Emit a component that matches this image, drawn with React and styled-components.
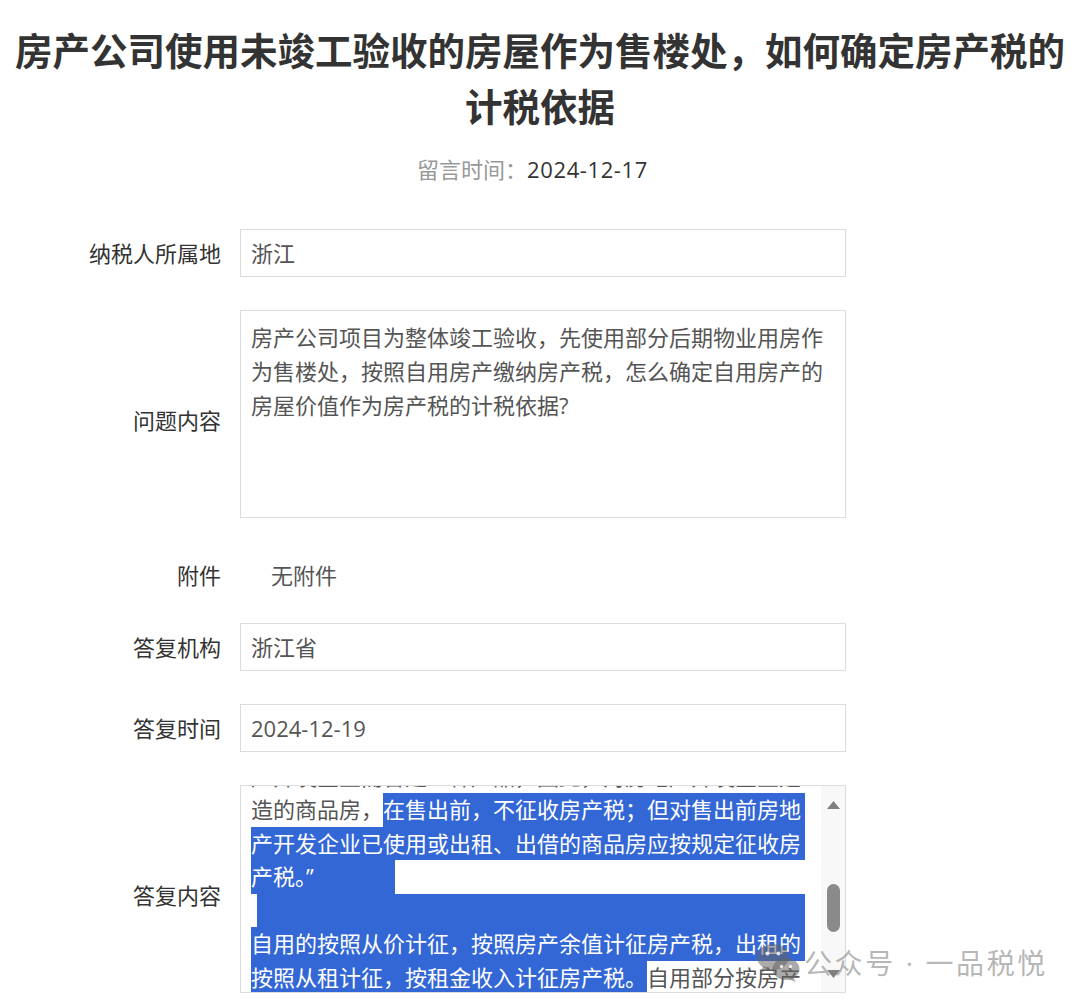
import React from "react";
import styled, { createGlobalStyle } from "styled-components";

const FONT = `"Open Sans", "Noto Sans CJK SC", sans-serif`;

const Global = createGlobalStyle`
  html, body { margin: 0; padding: 0; background: #fff; }
  body { font-family: ${FONT}; overflow: hidden; }
  * { box-sizing: border-box; }
`;

const Page = styled.div`
  position: relative;
  width: 1080px;
  height: 1006px;
  padding-top: 21px;
  overflow: hidden;
`;

const Title = styled.h1`
  margin: 0;
  font-family: "Noto Sans CJK SC", sans-serif;
  font-size: 37.5px;
  line-height: 56px;
  font-weight: 700;
  color: #333;
  text-align: center;
`;

const Meta = styled.div`
  margin-top: 19px;
  padding-right: 15px;
  font-size: 22px;
  line-height: 34px;
  text-align: center;
  color: #333;
`;

const MetaLabel = styled.span`
  color: #999;
`;

const MetaDate = styled.span`
  letter-spacing: 0.6px;
`;

const Form = styled.div`
  margin-top: 43px;
  display: flex;
  flex-direction: column;
  gap: 33px;
`;

const Row = styled.div`
  display: grid;
  grid-template-columns: 221px 606px;
  column-gap: 19px;
  align-items: center;
  ${(p) => (p.$height ? `height: ${p.$height}px; padding-top: 7px;` : "")}
`;

const Label = styled.div`
  font-size: 22px;
  line-height: 34px;
  color: #333;
  text-align: right;
  white-space: nowrap;
  padding-top: ${(p) => (p.$offset ? p.$offset : 0)}px;
`;

const Field = styled.div`
  height: 48px;
  border: 1px solid #dcdcdc;
  padding: 0 10px;
  font-size: 22px;
  line-height: 46px;
  color: #555;
`;

const TextBox = styled.div`
  height: 208px;
  border: 1px solid #dcdcdc;
  padding: 9px 10px;
  font-size: 22px;
  line-height: 34px;
  color: #555;
`;

const PlainValue = styled.div`
  font-size: 22px;
  line-height: 29px;
  color: #555;
  padding-left: 31px;
`;

const AnswerBox = styled.div`
  height: 208px;
  border: 1px solid #dcdcdc;
  display: flex;
  overflow: hidden;
`;

const AnswerText = styled.div`
  flex: 1;
  overflow: hidden;
  padding: 0 16px 0 10px;
  font-size: 22px;
  line-height: 33.5px;
  color: #555;
`;

const Lines = styled.div`
  margin-top: -26.5px;
`;

const Line = styled.div`
  display: flex;
  height: 33.5px;
  white-space: nowrap;
`;

const Sel = styled.span`
  background: #3367d6;
  color: #fff;
  ${(p) => (p.$fill ? "flex: 1;" : "")}
  ${(p) => (p.$width ? `width: ${p.$width}px;` : "")}
  ${(p) => (p.$indent ? `margin-left: ${p.$indent}px;` : "")}
`;

const ScrollTrack = styled.div`
  width: 24px;
  background: #f8f8f8;
  display: flex;
  flex-direction: column;
  align-items: center;
  padding-top: 15px;
`;

const Thumb = styled.div`
  width: 13px;
  height: 48px;
  border-radius: 7px;
  background: #8a8a8a;
  margin-top: 75px;
  margin-bottom: 38px;
`;

const Arrow = ({ down }) => (
  <svg width="13" height="8" viewBox="0 0 13 8">
    {down ? (
      <polygon points="0,0 13,0 6.5,8" fill="#7f7f7f" />
    ) : (
      <polygon points="0,8 13,8 6.5,0" fill="#7f7f7f" />
    )}
  </svg>
);

const Watermark = styled.div`
  position: absolute;
  left: 755px;
  top: 942px;
  display: flex;
  align-items: center;
  gap: 3px;
  pointer-events: none;
`;

const WatermarkText = styled.span`
  font-family: "Open Sans", "Noto Sans CJK SC", sans-serif;
  font-size: 28px;
  line-height: 40px;
  color: rgba(120, 120, 120, 0.55);
  letter-spacing: 2.6px;
  white-space: nowrap;
`;

const WeChatIcon = () => (
  <svg width="46" height="42" viewBox="0 0 46 42">
    <g fill="rgba(100,100,100,0.55)">
      <ellipse cx="18" cy="15" rx="16" ry="13" />
      <polygon points="8,24 6,31 15,26" />
      <ellipse cx="31" cy="27" rx="13.5" ry="11" />
      <polygon points="38,35 41,40 33,37" />
    </g>
    <g fill="rgba(255,255,255,0.8)">
      <circle cx="12.5" cy="11.5" r="2" />
      <circle cx="23.5" cy="11.5" r="2" />
      <circle cx="26.5" cy="24.5" r="1.7" />
      <circle cx="35.5" cy="24.5" r="1.7" />
    </g>
  </svg>
);

export default function App() {
  return (
    <Page>
      <Global />
      <Title>房产公司使用未竣工验收的房屋作为售楼处，如何确定房产税的计税依据</Title>
      <Meta>
        <MetaLabel>留言时间：</MetaLabel>
        <MetaDate>2024-12-17</MetaDate>
      </Meta>
      <Form>
        <Row>
          <Label>纳税人所属地</Label>
          <Field>浙江</Field>
        </Row>
        <Row>
          <Label $offset={12}>问题内容</Label>
          <TextBox>
            房产公司项目为整体竣工验收，先使用部分后期物业用房作为售楼处，按照自用房产缴纳房产税，怎么确定自用房产的房屋价值作为房产税的计税依据?
          </TextBox>
        </Row>
        <Row $height={39}>
          <Label>附件</Label>
          <PlainValue>无附件</PlainValue>
        </Row>
        <Row>
          <Label>答复机构</Label>
          <Field>浙江省</Field>
        </Row>
        <Row>
          <Label>答复时间</Label>
          <Field>2024-12-19</Field>
        </Row>
        <Row>
          <Label $offset={12}>答复内容</Label>
          <AnswerBox>
            <AnswerText>
              <Lines>
                <Line>产开发企业而言是一种产品，因此，对房地产开发企业建</Line>
                <Line>
                  造的商品房，
                  <Sel $fill>在售出前，不征收房产税；但对售出前房地</Sel>
                </Line>
                <Line>
                  <Sel $fill>产开发企业已使用或出租、出借的商品房应按规定征收房</Sel>
                </Line>
                <Line>
                  <Sel $width={144}>产税。”</Sel>
                </Line>
                <Line>
                  <Sel $fill $indent={6}>&nbsp;</Sel>
                </Line>
                <Line>
                  <Sel $fill>自用的按照从价计征，按照房产余值计征房产税，出租的</Sel>
                </Line>
                <Line>
                  <Sel>按照从租计征，按租金收入计征房产税。</Sel>自用部分按房产
                </Line>
              </Lines>
            </AnswerText>
            <ScrollTrack>
              <Arrow />
              <Thumb />
              <Arrow down />
            </ScrollTrack>
          </AnswerBox>
        </Row>
      </Form>
      <Watermark>
        <WeChatIcon />
        <WatermarkText>公众号 · 一品税悦</WatermarkText>
      </Watermark>
    </Page>
  );
}
